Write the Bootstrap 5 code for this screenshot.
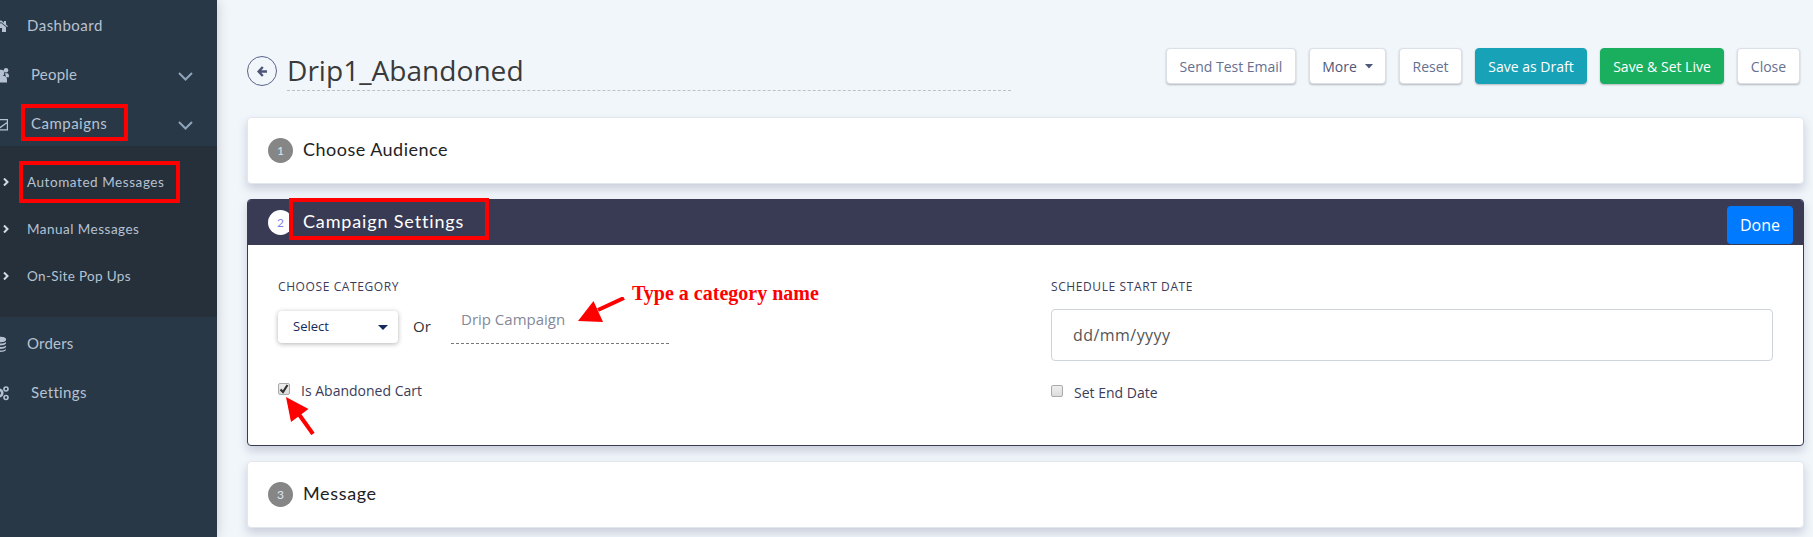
<!DOCTYPE html>
<html lang="en">
<head>
<meta charset="utf-8">
<meta name="viewport" content="width=device-width, initial-scale=1">
<title>Drip1_Abandoned</title>
<link href="https://cdn.jsdelivr.net/npm/bootstrap@5.3.0/dist/css/bootstrap.min.css" rel="stylesheet">
<style>
body{background:#f1f6fb;font-family:"Open Sans",sans-serif;color:#333;height:537px;overflow:hidden}
.side{width:217px;background:#293846;box-shadow:0 0 12px rgba(0,0,0,.18);font-family:Lato,"Open Sans",sans-serif;color:#b6c2d3;z-index:2}
.side .top-item{height:49px;padding:3px 0 0 27px;font-size:15px;position:relative}
.side .wide{padding-left:31px}
.side .glyph{position:absolute;left:-7px;top:19px;width:16px;height:16px;fill:currentColor}
.side .chev{position:absolute;left:178px;top:24px;width:15px;height:9px;fill:none;stroke:#8ea5bb;stroke-width:2}
.submenu{height:171px;background:#25303b;padding-top:12px}
.submenu>div{height:47px;padding:2px 0 0 27px;font-size:13.5px;position:relative}
.submenu svg{position:absolute;left:3px;top:20px;width:6px;height:8px;fill:none;stroke:#d3dce6;stroke-width:2}
.t{white-space:nowrap;display:inline-block}
.ls-1{letter-spacing:.2px}.ls-2{letter-spacing:.35px}.ls-3{letter-spacing:.48px}.ls-4{letter-spacing:.56px}.ls-5{letter-spacing:.65px}.ls-6{letter-spacing:.85px}
.mark-box{position:absolute;border:4px solid red;pointer-events:none}
.page-col{padding:48px 9px 0 30px}
.head{height:69px}
.back{width:30px;height:30px;border:1px solid #5a6487;border-radius:50%;margin-top:8px}
.title-line{width:724px;height:43px;margin-left:10px;border-bottom:1px dashed #bcc1c7;font-size:28.1px;line-height:44px;color:#3a3a3a}
.tools{gap:13px;margin-right:4px}
.tool{height:36px;border:1px solid #dadfe8;border-radius:4px;background:#fff;color:#66708f;font-size:14px;box-shadow:0 1px 2px rgba(0,0,0,.25);padding:0;line-height:35px}
.step{border:1px solid #e2e7ed;border-radius:4px;box-shadow:0 5px 10px rgba(60,70,100,.22);margin-bottom:15px;background:#fff}
.closed{height:67px;padding-left:20px}
.opened{height:247px;border-color:#393a54;position:relative}
.bar{height:45px;background:#393a54;padding:0 10px 0 20px;border-radius:3px 3px 0 0}
.num{width:25px;height:25px;border-radius:50%;background:#868686;color:#dce6f2;font:12px/26px Lato,sans-serif;text-align:center;margin-right:10px}
.stepname{font-family:Lato,sans-serif;font-size:18px;line-height:22px;color:#222;padding-bottom:4px}
.caps{font-size:12px;letter-spacing:.6px;color:#3c3c5a;line-height:16px}
.pick{width:120px;height:32px;border-radius:4px;background:#fff;box-shadow:0 1px 5px rgba(0,0,0,.3);font-size:13px;color:#14295c;padding:0 10px 0 15px;margin-top:16px}
.or{font-size:15px;line-height:20px;margin:21px 0 0 15px;width:38px}
.typed{width:218px;height:42px;border-bottom:1px dashed #777;font-size:15px;color:#84889a;padding-left:10px;line-height:35px;margin-top:7px}
.date{height:52px;border:1px solid #ced4da;border-radius:4px;color:#555;font-size:16px;line-height:51px;padding-left:21px;letter-spacing:.45px;margin-top:14px}
.tick{width:12px;height:12px;border:1px solid #aaa;border-radius:2px;background:linear-gradient(#eee,#ddd)}
.lab{font-size:14px;line-height:16px;color:#3c3c5a}
.note{position:absolute;font:bold 20px/24px "Liberation Serif",serif;color:red;white-space:nowrap}
</style>
</head>
<body>
<div class="d-flex h-100">
  <nav class="side flex-shrink-0 position-relative">
    <div style="margin-top:-1px"></div>
    <div class="top-item d-flex align-items-center"><svg class="glyph" viewBox="0 0 16 16"><path d="M8 2.200 1 8.200l.8.9L8 4l6.200 5.100.8-.9-2-1.700V3h-2v1.700zM3 9v5h4v-4h2v4h4V9L8 5z"/></svg><span class="t ls-3">Dashboard</span></div>
    <div class="top-item wide d-flex align-items-center"><svg class="glyph" viewBox="0 0 16 16"><circle cx="8" cy="6" r="3.300"/><path d="M3 15.500v-2.500c0-3 1.500-4 3-4h5c1.500 0 3 1 3 4v2.500z"/><circle cx="13" cy="3.300" r="2.300"/><path d="M12 6.200h2c1.500 0 2 1 2 4h-3z"/></svg><span class="t ls-1">People</span><svg class="chev" viewBox="0 0 15 9"><path d="m1 1 6.500 6.500L14 1"/></svg></div>
    <div class="top-item wide d-flex align-items-center"><svg class="glyph" viewBox="0 0 16 16"><path d="M0 3h15v11.500H0zm1.200 1.200v9h12.600v-9zM2 8.500l4.500 2.500L13.800 6v1.600L7 12.500 2 10z" fill-rule="evenodd"/></svg><span class="t ls-3">Campaigns</span><svg class="chev" viewBox="0 0 15 9"><path d="m1 1 6.500 6.500L14 1"/></svg></div>
    <div class="submenu">
      <div class="d-flex align-items-center"><svg viewBox="0 0 6 8"><path d="m1 .5 3.500 3.500L1 7.500"/></svg><span class="t ls-4">Automated Messages</span></div>
      <div class="d-flex align-items-center"><svg viewBox="0 0 6 8"><path d="m1 .5 3.500 3.500L1 7.500"/></svg><span class="t ls-3">Manual Messages</span></div>
      <div class="d-flex align-items-center"><svg viewBox="0 0 6 8"><path d="m1 .5 3.500 3.500L1 7.500"/></svg><span class="t ls-2">On-Site Pop Ups</span></div>
    </div>
    <div class="top-item d-flex align-items-center"><svg class="glyph" viewBox="0 0 16 16"><path d="M1 3c0-3 12-3 12 0v1c0 3-12 3-12 0zm0 3c2 2 10 2 12 0v1.500c-1 2.500-11 2.500-12 0zm0 3.500c2 2 10 2 12 0V11c-1 2.500-11 2.500-12 0zM1 13c2 2 10 2 12 0v1c-1 2.500-11 2.500-12 0z"/></svg><span class="t ls-1">Orders</span></div>
    <div class="top-item wide d-flex align-items-center"><svg class="glyph" viewBox="0 0 16 16"><g fill="none" stroke="currentColor"><circle cx="6" cy="8" r="3.300" stroke-width="2.600"/><circle cx="13" cy="4" r="2" stroke-width="1.600"/><circle cx="13" cy="12.500" r="2" stroke-width="1.600"/></g></svg><span class="t ls-2">Settings</span></div>
    <div class="mark-box" style="left:21px;top:104px;width:107px;height:37px"></div>
    <div class="mark-box" style="left:19px;top:161px;width:161px;height:42px"></div>
  </nav>
  <main class="page-col flex-grow-1">
    <div class="head d-flex align-items-start">
      <div class="back d-flex align-items-center justify-content-center"><svg width="10" height="11" viewBox="0 0 10 11" fill="none" stroke="#4d5678" stroke-width="2.400"><path d="M5.800 1 1.600 5.500l4.200 4.500M2 5.500h8"/></svg></div>
      <div class="title-line"><span class="t">Drip1_Abandoned</span></div>
      <div class="tools d-flex ms-auto">
        <button class="btn tool" style="width:130px">Send Test Email</button>
        <button class="btn tool" style="width:77px;color:#4e5878">More<svg width="8" height="5" class="ms-2 mb-1" viewBox="0 0 8 5"><path d="M0 0h8L4 4.500z" fill="#4e5878"/></svg></button>
        <button class="btn tool" style="width:63px">Reset</button>
        <button class="btn tool text-white" style="width:112px;background:#17a2b8;border-color:#17a2b8">Save as Draft</button>
        <button class="btn tool text-white" style="width:124px;background:#1aae5f;border-color:#1aae5f">Save &amp; Set Live</button>
        <button class="btn tool" style="width:63px">Close</button>
      </div>
    </div>
    <section class="step closed d-flex align-items-center"><span class="num">1</span><span class="stepname t ls-3">Choose Audience</span></section>
    <section class="step opened">
      <div class="bar d-flex align-items-center"><span class="num" style="background:#fff;color:#7f83e8">2</span><span class="stepname t ls-6 text-white">Campaign Settings</span>
        <button class="btn ms-auto text-white align-self-start" style="background:#007bff;width:66px;height:38px;margin-top:6px;border-radius:4px;padding:0">Done</button></div>
      <div class="d-flex" style="padding:34px 30px 0 30px">
        <div style="width:773px">
          <div class="caps"><span class="t">CHOOSE CATEGORY</span></div>
          <div class="d-flex align-items-start">
            <div class="pick d-flex align-items-center justify-content-between">Select<svg width="10" height="5" viewBox="0 0 10 5"><path d="M0 0h10L5 5z" fill="#14295c"/></svg></div>
            <span class="or">Or</span>
            <div class="typed"><span class="t">Drip Campaign</span></div>
          </div>
          <div class="d-flex align-items-start" style="margin-top:39px">
            <span class="tick"><svg class="d-block" width="10" height="10" viewBox="0 0 10 10"><path d="m1.500 5.500 2.500 2.500 4.500-7" fill="none" stroke="#333" stroke-width="2.200"/></svg></span>
            <span class="lab t" style="margin-left:11px">Is Abandoned Cart</span>
          </div>
        </div>
        <div class="flex-grow-1">
          <div class="caps"><span class="t">SCHEDULE START DATE</span></div>
          <div class="date">dd/mm/yyyy</div>
          <div class="d-flex align-items-start" style="margin-top:24px"><span class="tick"></span><span class="lab t" style="margin-left:11px">Set End Date</span></div>
        </div>
      </div>
      <div class="mark-box" style="left:41px;top:-2px;width:200px;height:42px"></div>
      <div class="note" style="left:384px;top:81px">Type a category name</div>
      <svg class="position-absolute" style="left:330px;top:97px" width="48" height="28" viewBox="0 0 48 28"><path d="M46 1 20 13" stroke="red" stroke-width="4"/><path d="M0 24 15.500 4 25 25z" fill="red"/></svg>
      <svg class="position-absolute" style="left:38px;top:197px" width="30" height="38" viewBox="0 0 30 38"><path d="M27 37 12 16" stroke="red" stroke-width="4"/><path d="M0 0 22.500 12 5 25z" fill="red"/></svg>
    </section>
    <section class="step closed d-flex align-items-center"><span class="num">3</span><span class="stepname t ls-5">Message</span></section>
  </main>
</div>
<script src="https://cdn.jsdelivr.net/npm/bootstrap@5.3.0/dist/js/bootstrap.bundle.min.js"></script>
</body>
</html>
